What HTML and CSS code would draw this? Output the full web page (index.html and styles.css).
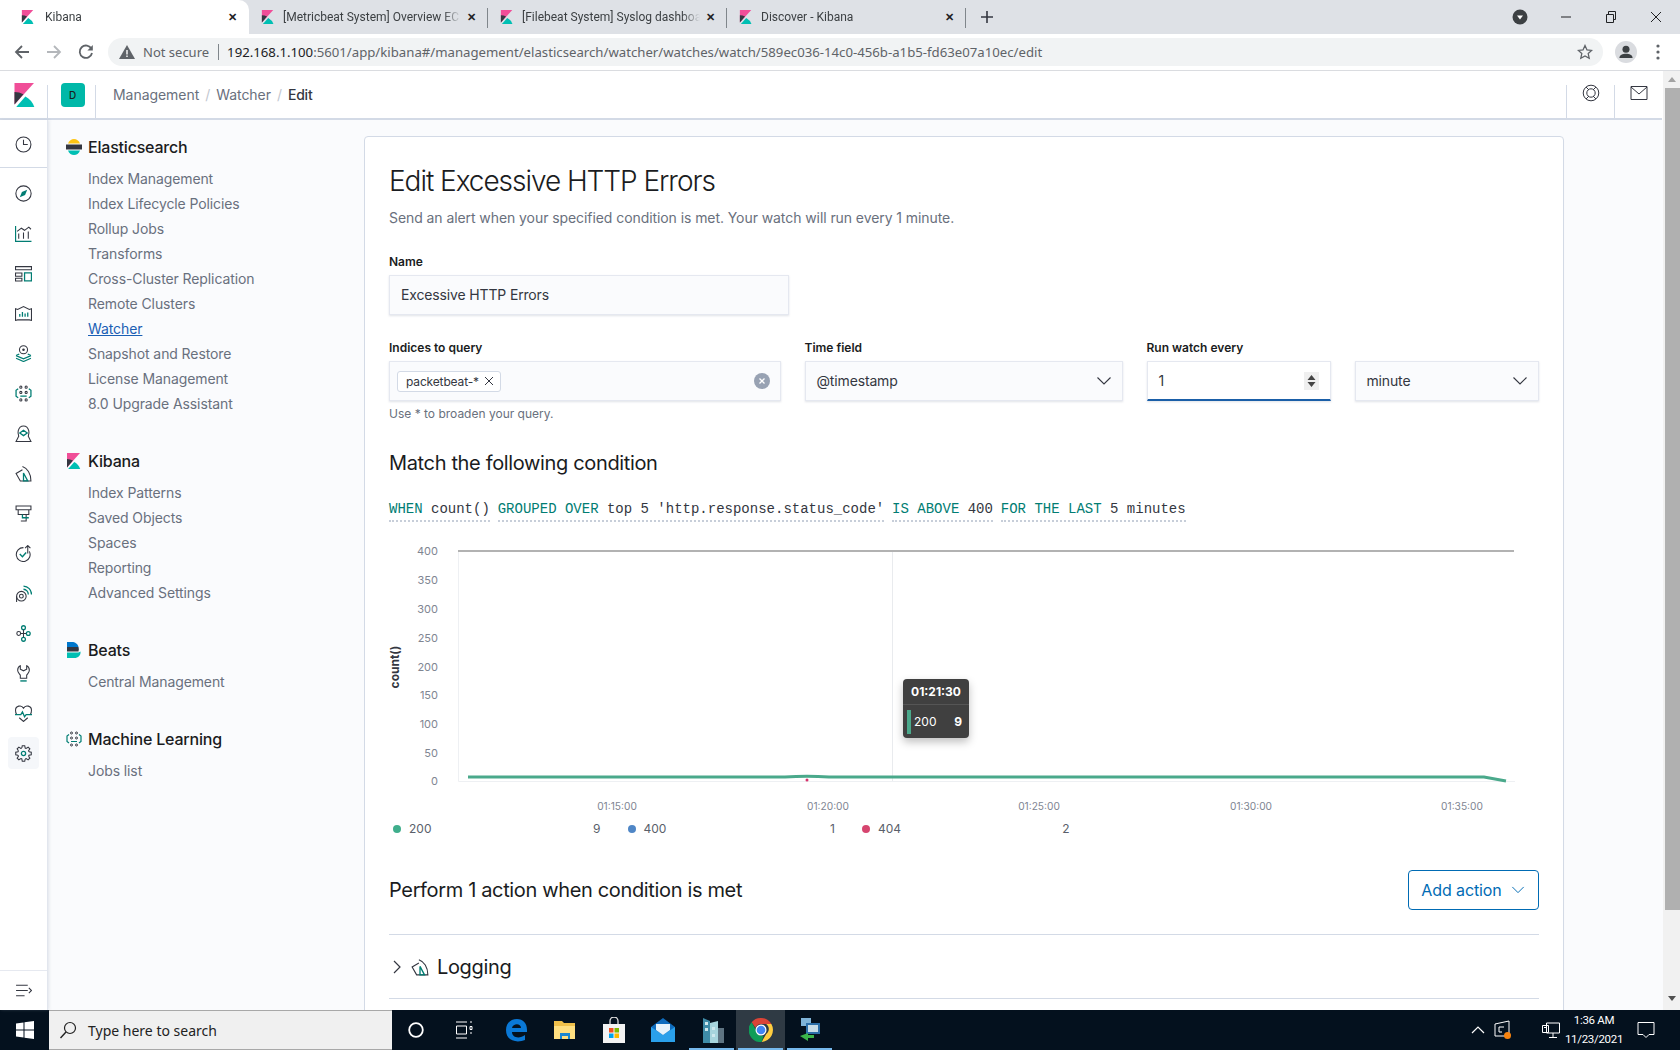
FILE: index.html
```html
<!DOCTYPE html>
<html lang="en">
<head>
    <meta charset="UTF-8">
    <meta name="viewport" content="width=device-width, initial-scale=1.0">
    <title>Kibana</title>
    <link rel="stylesheet" href="styles.css">
</head>
<body>
    <svg class="defs" width="0" height="0" aria-hidden="true">
        <symbol id="k-logo" viewBox="0 0 32 32">
            <path fill="#f04e98" d="M2 0v28.8L28 0z"/>
            <path fill="#343741" d="M2 12v16.8l11.9-13.7A24.7 24.7 0 0 0 2 12z"/>
            <path fill="#00bfb3" d="M16.5 18L4.3 32h24.1a24.7 24.7 0 0 0-11.9-14z"/>
        </symbol>
        <symbol id="ml-icon" viewBox="0 0 16 16">
            <g fill="none" stroke="#343741">
                <circle cx="5.5" cy="2" r="1"/><circle cx="10.5" cy="2" r="1"/>
                <circle cx="5.5" cy="7" r="1"/><circle cx="10.5" cy="7" r="1"/>
                <circle cx="5.5" cy="14" r="1"/><circle cx="10.5" cy="14" r="1"/>
            </g>
            <path fill="none" stroke="#017d73" stroke-width="1.2" d="M3 3.5L1 5v5.5L3 12M13 3.5L15 5v5.5L13 12M5 10.5h6"/>
        </symbol>
        <symbol id="log-icon" viewBox="0 0 16 16">
            <path fill="none" stroke="#343741" d="M7 1.5c4.5 1.500 8 6.500 8 13.500H5L1 8l6-3.500"/>
            <path fill="none" stroke="#017d73" stroke-width="1.2" d="M8 7.500l4 7.500H8z"/>
        </symbol>
        <symbol id="chevron" viewBox="0 0 16 16">
            <path fill="none" stroke="currentColor" stroke-width="1.1" d="M1.5 4.5L8 11l6.5-6.5"/>
        </symbol>
        <path id="gear-tooth" fill="none" stroke="#343741" d="M6.42 2.84L6.84.69h2.32l.42 2.15.95.39"/>
    </svg>

    <div class="tabstrip">
        <div class="tab tab-active">
            <svg class="favicon"><use href="#k-logo"/></svg>
            <span class="tab-title">Kibana</span>
            <span class="tab-close">✕</span>
        </div>
        <div class="tab">
            <svg class="favicon"><use href="#k-logo"/></svg>
            <span class="tab-title">[Metricbeat System] Overview EC</span>
            <span class="tab-close">✕</span>
        </div>
        <div class="tab">
            <svg class="favicon"><use href="#k-logo"/></svg>
            <span class="tab-title">[Filebeat System] Syslog dashboa</span>
            <span class="tab-close">✕</span>
        </div>
        <div class="tab">
            <svg class="favicon"><use href="#k-logo"/></svg>
            <span class="tab-title">Discover - Kibana</span>
            <span class="tab-close">✕</span>
        </div>
        <svg class="new-tab" width="14" height="14" viewBox="0 0 14 14"><path stroke="#343741" stroke-width="1.6" d="M7 1v12M1 7h12"/></svg>
        <div class="window-controls">
            <svg width="16" height="16" viewBox="0 0 16 16"><circle cx="8" cy="8" r="7.5" fill="#3c4043"/><path fill="#fff" d="M5 6.5h6L8 10.5z"/></svg>
            <svg class="win-min" width="12" height="12" viewBox="0 0 12 12"><path stroke="#202124" d="M1 6h10"/></svg>
            <svg class="win-max" width="12" height="12" viewBox="0 0 12 12"><path fill="none" stroke="#202124" d="M1.5 3.5h7v8h-7zM3.5 3.5v-3h7v8h-2"/></svg>
            <svg class="win-close" width="12" height="12" viewBox="0 0 12 12"><path stroke="#202124" d="M1 1l10 10M11 1L1 11"/></svg>
        </div>
    </div>

    <div class="toolbar">
        <svg class="nav-btn" width="16" height="16" viewBox="0 0 16 16"><path fill="none" stroke="#5f6368" stroke-width="1.8" d="M15 8H2M8 2L2 8l6 6"/></svg>
        <svg class="nav-btn" width="16" height="16" viewBox="0 0 16 16"><path fill="none" stroke="#b4b7bb" stroke-width="1.8" d="M1 8h13M8 2l6 6-6 6"/></svg>
        <svg class="nav-btn" width="16" height="16" viewBox="0 0 16 16"><path fill="none" stroke="#5f6368" stroke-width="1.8" d="M13.5 5A6.2 6.2 0 1 0 14 9"/><path fill="#5f6368" d="M14.8 1v5.4H9.4z"/></svg>
        <div class="omnibox">
            <svg width="16" height="14" viewBox="0 0 16 14"><path fill="#5f6368" d="M8 0l8 14H0z"/><path stroke="#fff" stroke-width="1.4" d="M8 5v4.5M8 10.5V12"/></svg>
            <span class="not-secure">Not secure</span>
            <span class="omni-sep"></span>
            <span class="url"><b>192.168.1.100</b>:5601/app/kibana#/management/elasticsearch/watcher/watches/watch/589ec036-14c0-456b-a1b5-fd63e07a10ec/edit</span>
            <svg class="star" width="16" height="16" viewBox="0 0 16 16"><path fill="none" stroke="#5f6368" stroke-width="1.3" d="M8 1.5l2 4.4 4.7.5-3.5 3.2 1 4.7L8 11.900l-4.200 2.400 1-4.700-3.500-3.200 4.700-.5z"/></svg>
        </div>
        <svg class="avatar" width="22" height="22" viewBox="0 0 20 20"><circle cx="10" cy="10" r="10" fill="#dadce0"/><circle cx="10" cy="7.5" r="3.2" fill="#3c4043"/><path fill="#3c4043" d="M4 15.5c0-3 3-4 6-4s6 1 6 4z"/></svg>
        <svg class="kebab" width="4" height="16" viewBox="0 0 4 16"><g fill="#5f6368"><circle cx="2" cy="2" r="1.6"/><circle cx="2" cy="8" r="1.6"/><circle cx="2" cy="14" r="1.6"/></g></svg>
    </div>

    <div class="app">
        <div class="app-body">
            <header class="kbn-header">
                <div class="logo-cell"><svg width="24" height="26"><use href="#k-logo"/></svg></div>
                <div class="space-cell"><span class="space-badge">D</span></div>
                <nav class="breadcrumbs">
                    <span>Management</span><i>/</i><span>Watcher</span><i>/</i><strong>Edit</strong>
                </nav>
                <div class="header-btn">
                    <svg width="18" height="18" viewBox="0 0 18 18"><g fill="none" stroke="#343741"><circle cx="9" cy="9" r="7.8"/><circle cx="9" cy="9" r="4.2"/><path d="M4 3l3 3M14 3l-3 3M4 15l3-3M14 15l-3-3"/></g></svg>
                </div>
                <div class="header-btn">
                    <svg width="18" height="14" viewBox="0 0 18 14"><path fill="none" stroke="#343741" d="M1 .5h16v13H1zM1 1l8 7 8-7"/></svg>
                </div>
            </header>

            <div class="columns">
                <aside class="rail">
                    <div class="rail-top">
                        <svg viewBox="0 0 16 16"><g fill="none" stroke="#343741"><circle cx="8" cy="8" r="7"/><path d="M8 3.5V8h4"/></g></svg>
                    </div>
                    <ul class="rail-list">
                        <li><svg viewBox="0 0 16 16"><circle cx="8" cy="8" r="7.2" fill="none" stroke="#343741"/><path fill="#017d73" d="M11.5 4.5l-2 5-5 2 2-5z"/></svg></li>
                        <li><svg viewBox="0 0 16 16"><path fill="none" stroke="#017d73" stroke-width="1.2" d="M.5 1v14.5h15"/><path fill="none" stroke="#343741" d="M3.5 13V8M8 13V7M12.5 13V6M2 6l4-3 3 2 4-3 2 2"/></svg></li>
                        <li><svg viewBox="0 0 16 16"><g fill="none"><path stroke="#343741" d="M.5 1.5h15v3H.5zM.5 7.5h6v3h-6zM.5 12.5h6V15h-6z"/><path stroke="#017d73" stroke-width="1.2" d="M9 7.5h6.500V15H9z"/></g></svg></li>
                        <li><svg viewBox="0 0 16 16"><path fill="none" stroke="#343741" d="M.5 3.5l2 .7L8 1.500l5.500 2.700 2-.7v11l-2-.5h-11l-2 .5z"/><path stroke="#017d73" stroke-width="1.2" d="M4.500 11V8.500M7 11V6.500M9.500 11V8M12 11V7"/></svg></li>
                        <li><svg viewBox="0 0 16 16"><circle cx="8" cy="4.500" r="3.800" fill="none" stroke="#343741"/><circle cx="8" cy="4.500" r="1.200" fill="#343741"/><path fill="none" stroke="#017d73" stroke-width="1.2" d="M1 10l7 3 7-3M1 12.500l7 3 7-3M4 8.500L1 10M12 8.500l3 1.500"/></svg></li>
                        <li><svg viewBox="0 0 16 16"><use href="#ml-icon"/></svg></li>
                        <li><svg viewBox="0 0 16 16"><path fill="none" stroke="#343741" d="M1 15.500h14L12.500 10.500C13 9 13.500 7.500 13 5.500 12.200 2.500 10 1 8 1S3.800 2.500 3 5.500C2.500 7.500 3 9 3.500 10.500z"/><path fill="none" stroke="#017d73" stroke-width="1.2" d="M4.500 7.500L8 5l3.500 2.500L8 10z"/></svg></li>
                        <li><svg viewBox="0 0 16 16"><use href="#log-icon"/></svg></li>
                        <li><svg viewBox="0 0 16 16"><path fill="none" stroke="#343741" d="M1 1h14v3.500H1zM3 4.500V9h10V4.500M10.500 9v6h-5"/><path fill="none" stroke="#017d73" stroke-width="1.2" d="M7 9v3h6"/></svg></li>
                        <li><svg viewBox="0 0 16 16"><path fill="none" stroke="#343741" d="M13.500 6A6.500 6.500 0 1 1 8 2.500M12 8V1M9.500 3L12 .5 14.500 3"/><path fill="none" stroke="#017d73" stroke-width="1.3" d="M4.500 8.500L7 11l3.500-4"/></svg></li>
                        <li><svg viewBox="0 0 16 16"><g fill="none"><circle cx="6" cy="10.500" r="4.500" stroke="#343741"/><circle cx="6" cy="10.500" r="1.800" stroke="#343741"/><path stroke="#343741" d="M1.500 10.500V16"/><path stroke="#017d73" stroke-width="1.2" d="M8 1a7.800 7.800 0 0 1 7.500 8M8 4a4.800 4.800 0 0 1 4.500 5"/></g></svg></li>
                        <li><svg viewBox="0 0 16 16"><g fill="none"><g stroke="#017d73" stroke-width="1.2"><circle cx="8" cy="2.500" r="1.800"/><circle cx="12.500" cy="8" r="1.800"/><circle cx="8" cy="13.500" r="1.800"/></g><circle cx="3.500" cy="8" r="1.800" stroke="#343741"/><path stroke="#343741" d="M5.500 8h5M8 4.500v7"/></g></svg></li>
                        <li><svg viewBox="0 0 16 16"><path fill="none" stroke="#343741" d="M5 .8C3 1.800 2.500 3.500 2.500 5c0 2 1.500 3 2.500 4.500v3h6v-3c1-1.500 2.500-2.500 2.500-4.500 0-1.500-.5-3.200-2.500-4.200V4L8 5.500 5 4z"/><path stroke="#017d73" stroke-width="1.3" d="M5 15h6"/></svg></li>
                        <li><svg viewBox="0 0 16 16"><path fill="none" stroke="#343741" d="M1.500 9C.5 7.500.5 5.800.5 5A4 4 0 0 1 8 3a4 4 0 0 1 7.500 2c0 .8 0 2.500-1 4M4 12l4 3.500 4-3.500"/><path fill="none" stroke="#017d73" stroke-width="1.2" d="M0 9h5.500L7 6.500 9 11l1.500-2H16"/></svg></li>
                        <li class="rail-active">
                            <svg viewBox="0 0 16 16">
                                <use href="#gear-tooth"/>
                                <use href="#gear-tooth" transform="rotate(45 8 8)"/>
                                <use href="#gear-tooth" transform="rotate(90 8 8)"/>
                                <use href="#gear-tooth" transform="rotate(135 8 8)"/>
                                <use href="#gear-tooth" transform="rotate(180 8 8)"/>
                                <use href="#gear-tooth" transform="rotate(225 8 8)"/>
                                <use href="#gear-tooth" transform="rotate(270 8 8)"/>
                                <use href="#gear-tooth" transform="rotate(315 8 8)"/>
                                <circle cx="8" cy="8" r="2" fill="none" stroke="#017d73" stroke-width="1.2"/>
                            </svg>
                        </li>
                    </ul>
                    <div class="rail-bottom">
                        <svg viewBox="0 0 16 16"><path fill="none" stroke="#343741" d="M1 3h11M1 8h11M13 5.500L15.500 8 13 10.500M1 13h8"/></svg>
                    </div>
                </aside>

                <nav class="sidebar">
                    <section class="side-section">
                        <h3>
                            <svg width="16" height="16" viewBox="0 0 16 16"><path fill="#fec514" d="M2 4.500C3 1.500 5.500 0 8 0s5 1.500 6 4.500z"/><rect y="5.500" width="16" height="5" fill="#343741"/><path fill="#00bfb3" d="M2 11.500h12C13 14.500 10.500 16 8 16s-5-1.500-6-4.500z"/></svg>
                            Elasticsearch
                        </h3>
                        <a>Index Management</a>
                        <a>Index Lifecycle Policies</a>
                        <a>Rollup Jobs</a>
                        <a>Transforms</a>
                        <a>Cross-Cluster Replication</a>
                        <a>Remote Clusters</a>
                        <a class="current">Watcher</a>
                        <a>Snapshot and Restore</a>
                        <a>License Management</a>
                        <a>8.0 Upgrade Assistant</a>
                    </section>
                    <section class="side-section">
                        <h3><svg width="16" height="16"><use href="#k-logo"/></svg> Kibana</h3>
                        <a>Index Patterns</a>
                        <a>Saved Objects</a>
                        <a>Spaces</a>
                        <a>Reporting</a>
                        <a>Advanced Settings</a>
                    </section>
                    <section class="side-section">
                        <h3>
                            <svg width="16" height="16" viewBox="0 0 16 16"><path fill="#0077cc" d="M1 0h5c3 0 6 2 6.500 5H1z"/><path fill="#343741" d="M1 5h11.500c.5 1.500 .5 3 0 4.500H1z"/><path fill="#00bfb3" d="M1 10.500h11.500l2-1c.5 4-2.500 6.500-6 6.500H1z"/></svg>
                            Beats
                        </h3>
                        <a>Central Management</a>
                    </section>
                    <section class="side-section">
                        <h3><svg width="16" height="16"><use href="#ml-icon"/></svg> Machine Learning</h3>
                        <a>Jobs list</a>
                    </section>
                </nav>

                <main class="content">
                    <div class="panel">
                        <h1>Edit Excessive HTTP Errors</h1>
                        <p class="subtitle">Send an alert when your specified condition is met. Your watch will run every 1 minute.</p>

                        <div class="field field-name">
                            <label>Name</label>
                            <div class="input input-text">Excessive HTTP Errors</div>
                        </div>

                        <div class="form-row">
                            <div class="field">
                                <label>Indices to query</label>
                                <div class="input input-combo">
                                    <span class="chip">packetbeat-* <svg width="10" height="10" viewBox="0 0 10 10"><path stroke="#343741" d="M1 1l8 8M9 1L1 9"/></svg></span>
                                    <svg class="clear" width="16" height="16" viewBox="0 0 16 16"><circle cx="8" cy="8" r="8" fill="#98a2b3"/><path stroke="#fff" stroke-width="1.3" d="M5.500 5.500l5 5M10.500 5.500l-5 5"/></svg>
                                </div>
                                <p class="hint">Use * to broaden your query.</p>
                            </div>
                            <div class="field">
                                <label>Time field</label>
                                <div class="input input-select"><span>@timestamp</span> <svg class="caret" width="16" height="16"><use href="#chevron"/></svg></div>
                            </div>
                            <div class="field">
                                <label>Run watch every</label>
                                <div class="input input-number">1
                                    <svg class="stepper" width="15" height="18" viewBox="0 0 15 18"><rect width="15" height="18" fill="#efefef"/><path fill="#444" d="M7.500 3l4 5h-8zM7.500 15l-4-5h8z"/></svg>
                                </div>
                            </div>
                            <div class="field">
                                <label>&nbsp;</label>
                                <div class="input input-select"><span>minute</span> <svg class="caret" width="16" height="16"><use href="#chevron"/></svg></div>
                            </div>
                        </div>

                        <h2 class="cond-title">Match the following condition</h2>
                        <div class="condition">
                            <span><em>WHEN</em> count()</span>
                            <span><em>GROUPED OVER</em> top 5 'http.response.status_code'</span>
                            <span><em>IS ABOVE</em> 400</span>
                            <span><em>FOR THE LAST</em> 5 minutes</span>
                        </div>

                        <div class="chart">
                            <svg class="chart-svg" width="1158" height="279" viewBox="381 540 1158 279">
                                <g class="y-ticks">
                                    <text x="438" y="555">400</text>
                                    <text x="438" y="584">350</text>
                                    <text x="438" y="613">300</text>
                                    <text x="438" y="642">250</text>
                                    <text x="438" y="671">200</text>
                                    <text x="438" y="699">150</text>
                                    <text x="438" y="728">100</text>
                                    <text x="438" y="757">50</text>
                                    <text x="438" y="785">0</text>
                                </g>
                                <text class="y-title" transform="translate(399 667) rotate(-90)">count()</text>
                                <path stroke="#eef0f3" fill="none" d="M458.500 551v230.500H1515"/>
                                <path stroke="#e9ebee" d="M892.500 552v229"/>
                                <path stroke="#b2b2b2" stroke-width="2" d="M458 551h1056"/>
                                <path stroke="#4aa98b" stroke-width="3" fill="none" d="M468 777H785Q807 775.500 829 777H1484L1506 781"/>
                                <circle cx="807" cy="780" r="1.500" fill="#d6336c"/>
                                <g class="x-ticks">
                                    <text x="617" y="810">01:15:00</text>
                                    <text x="828" y="810">01:20:00</text>
                                    <text x="1039" y="810">01:25:00</text>
                                    <text x="1251" y="810">01:30:00</text>
                                    <text x="1462" y="810">01:35:00</text>
                                </g>
                            </svg>
                            <div class="chart-tip">
                                <div class="tip-head">01:21:30</div>
                                <div class="tip-row"><span class="tip-bar"></span><span>200</span><b>9</b></div>
                            </div>
                            <div class="legend">
                                <div class="legend-item"><span class="dot dot-green"></span><span>200</span><span class="legend-val">9</span></div>
                                <div class="legend-item"><span class="dot dot-blue"></span><span>400</span><span class="legend-val">1</span></div>
                                <div class="legend-item"><span class="dot dot-red"></span><span>404</span><span class="legend-val">2</span></div>
                            </div>
                        </div>

                        <div class="action-head">
                            <h2>Perform 1 action when condition is met</h2>
                            <button class="add-action">Add action <svg width="14" height="14"><use href="#chevron"/></svg></button>
                        </div>

                        <div class="accordion">
                            <svg class="acc-arrow" width="12" height="14" viewBox="0 0 12 14"><path fill="none" stroke="#343741" stroke-width="1.2" d="M3 1l6 6-6 6"/></svg>
                            <svg width="18" height="18"><use href="#log-icon"/></svg>
                            <span>Logging</span>
                        </div>
                    </div>
                </main>

                <div class="scrollbar">
                    <span class="arrow-up"></span>
                    <div class="thumb"></div>
                    <span class="arrow-down"></span>
                </div>
            </div>
        </div>
    </div>

    <footer class="taskbar">
        <div class="start">
            <svg width="18" height="18" viewBox="0 0 18 18"><path fill="#fff" d="M0 2.500l7.500-1v7H0zM8.500 1.300L18 0v8.500H8.500zM0 9.500h7.500v7L0 15.500zM8.500 9.500H18V18l-9.500-1.300z"/></svg>
        </div>
        <div class="search">
            <svg width="18" height="18" viewBox="0 0 18 18"><circle cx="11" cy="7" r="5.500" fill="none" stroke="#222" stroke-width="1.2"/><path stroke="#222" stroke-width="1.4" d="M7 11l-5.500 6"/></svg>
            <span>Type here to search</span>
        </div>
        <div class="task-icon task-sys">
            <svg width="16" height="16" viewBox="0 0 16 16"><circle cx="8" cy="8" r="6.800" fill="none" stroke="#fff" stroke-width="1.8"/></svg>
        </div>
        <div class="task-icon task-sys">
            <svg width="18" height="18" viewBox="0 0 18 18"><path fill="none" stroke="#fff" d="M1 1h11M1 17h11M1.500 5h10v8h-10zM15 1h2M15 5.500h2v3h-2zM15 12h2"/></svg>
        </div>
        <div class="task-icon task-edge">
            <svg width="22" height="24" viewBox="0 0 22 24"><path fill="#0a78d6" d="M1 12C1 5 6 1 12 1c6 0 10 4 10 11v2H7c0 6 8 7 13 3v5c-7 3-19 2-19-10zM7 10h9c0-5-8-5-9 0z"/></svg>
        </div>
        <div class="task-icon">
            <svg width="22" height="20" viewBox="0 0 22 20"><path fill="#f0c04a" d="M0 1h8l2 2h11v16H0z"/><path fill="#ffdf80" d="M0 6h21v13H0z"/><path fill="#1a86d0" d="M6 19v-6h10v6h-2v-3H8v3z"/></svg>
        </div>
        <div class="task-icon">
            <svg width="22" height="26" viewBox="0 0 22 26"><path fill="none" stroke="#ddd" stroke-width="1.3" d="M7 7V4a4 4 0 0 1 8 0v3"/><rect y="7" width="22" height="19" fill="#f3f3f3"/><rect x="6" y="11" width="4.500" height="4.500" fill="#f25022"/><rect x="11.500" y="11" width="4.500" height="4.500" fill="#7fba00"/><rect x="6" y="16.500" width="4.500" height="4.500" fill="#00a4ef"/><rect x="11.500" y="16.500" width="4.500" height="4.500" fill="#ffb900"/></svg>
        </div>
        <div class="task-icon">
            <svg width="24" height="24" viewBox="0 0 24 24"><path fill="#0f6cbd" d="M12 0l12 9v15H0V9z"/><path fill="#2aa0ea" d="M0 9l12 8 12-8v15H0z"/><path fill="#e6f3fb" d="M5 6h14v6l-7 5-7-5z"/></svg>
        </div>
        <div class="task-icon task-open">
            <svg width="24" height="26" viewBox="0 0 24 26"><path fill="#3f8ca8" d="M3 1l7 3v22H3z"/><path fill="#a7d5dd" d="M10 6l8-2v22h-8z"/><path fill="#5e7482" d="M18 11h6v15h-6z"/><path fill="#cfe9ee" d="M5 5h3v3H5zM5 11h3v3H5zM12 10h3v3h-3zM12 17h3v3h-3z"/></svg>
        </div>
        <div class="task-icon task-open task-current">
            <svg width="24" height="24" viewBox="0 0 24 24"><path fill="#db4437" d="M12 0a12 12 0 0 1 10.400 6H12a6 6 0 0 0-5.600 3.800L2.600 4.200A12 12 0 0 1 12 0z"/><path fill="#ffcd40" d="M22.400 6a12 12 0 0 1-9.700 17.900l4.500-8a6 6 0 0 0 0-9.900z"/><path fill="#0f9d58" d="M12.700 24A12 12 0 0 1 2.600 4.200l4.700 8.200a6 6 0 0 0 7.200 5.300z"/><circle cx="12" cy="12" r="5.500" fill="#fff"/><circle cx="12" cy="12" r="4.300" fill="#4285f4"/></svg>
        </div>
        <div class="task-icon task-open">
            <svg width="24" height="26" viewBox="0 0 24 26"><path fill="#7fb4d8" d="M3 1h10v8H3z"/><path fill="#2b6ea8" d="M8 6h14v11H8z"/><path fill="#c8dde8" d="M10 8h10v7H10z"/><path fill="#3bb54a" d="M2 19l8-3v2h6v3h-6v3z"/></svg>
        </div>
        <div class="tray">
            <svg width="14" height="8" viewBox="0 0 14 8"><path fill="none" stroke="#fff" stroke-width="1.2" d="M1 7l6-6 6 6"/></svg>
            <svg class="tray-box" width="18" height="20" viewBox="0 0 18 20"><path fill="none" stroke="#fff" d="M1 4l14-3v15H1z"/><path stroke="#fff" fill="none" d="M5 7h5M5 7v5h3"/><circle cx="13.500" cy="15.500" r="3.500" fill="#f7830f"/></svg>
            <svg class="tray-net" width="18" height="18" viewBox="0 0 18 18"><path fill="none" stroke="#fff" d="M4.500 2h13v10h-13zM11 12v4M7 16.500h8M.5 4.500h6v7h-6zM2 6.500h3"/></svg>
            <div class="clock"><span>1:36 AM</span><span>11/23/2021</span></div>
            <svg class="tray-note" width="18" height="18" viewBox="0 0 18 18"><path fill="none" stroke="#fff" d="M1 1.500h16v12h-5l-3 3-3-3H1z"/></svg>
        </div>
    </footer>
</body>
</html>
```

FILE: styles.css
```css
* {
    box-sizing: border-box;
}
html, body {
    height: 100%;
}
body {
    margin: 0;
    height: 1050px;
    width: 1680px;
    overflow: hidden;
    display: flex;
    flex-direction: column;
    font-family: "Inter", "Liberation Sans", sans-serif;
    color: #343741;
    background: #fff;
}
.defs {
    position: absolute;
}

/* browser chrome */
.tabstrip {
    height: 34px;
    flex: none;
    display: flex;
    align-items: stretch;
    background: #dee1e6;
    font-family: "Roboto", sans-serif;
    font-size: 12px;
}
.tab {
    width: 239px;
    display: flex;
    align-items: center;
    padding: 0 9px 0 12px;
    position: relative;
}
.tab::after {
    content: "";
    position: absolute;
    right: 0;
    top: 8px;
    bottom: 6px;
    width: 1px;
    background: #80868b;
}
.tab-active {
    width: 249px;
    padding-left: 21px;
    background: #fff;
    border-radius: 0 10px 0 0;
}
.tab-active::after {
    display: none;
}
.favicon {
    width: 14px;
    height: 16px;
    flex: none;
    margin-right: 8px;
}
.tab-active .favicon {
    margin-right: 10px;
}
.tab-title {
    flex: 1;
    white-space: nowrap;
    overflow: hidden;
    color: #3c4043;
    -webkit-mask-image: linear-gradient(to right, #000 90%, transparent);
    mask-image: linear-gradient(to right, #000 90%, transparent);
}
.tab-close {
    flex: none;
    width: 16px;
    text-align: center;
    font-size: 11px;
    font-weight: bold;
    color: #202124;
    margin-left: 2px;
}
.new-tab {
    margin: 10px 0 0 14px;
}
.window-controls {
    margin-left: auto;
    display: flex;
    align-items: center;
    padding-right: 18px;
}
.win-min {
    margin-left: 32px;
}
.win-max, .win-close {
    margin-left: 33px;
}
.toolbar {
    height: 37px;
    flex: none;
    display: flex;
    align-items: center;
    padding: 1px 0 2px 14px;
    background: #fff;
    border-bottom: 1px solid #dadce0;
    font-family: "Noto Sans", sans-serif;
}
.nav-btn {
    margin-right: 16px;
}
.omnibox {
    width: 1495px;
    height: 28px;
    margin-left: -2px;
    border-radius: 14px;
    background: #f1f3f4;
    display: flex;
    align-items: center;
    padding: 0 10px 0 11px;
    font-size: 13px;
    color: #5f6368;
}
.not-secure {
    margin-left: 8px;
}
.omni-sep {
    width: 1px;
    height: 16px;
    background: #80868b;
    margin: 0 8px 0 9px;
}
.url {
    white-space: nowrap;
    font-size: 13.2px;
}
.url b {
    font-weight: 400;
    color: #202124;
}
.star {
    margin-left: auto;
}
.avatar {
    margin-left: 12px;
}
.kebab {
    margin-left: 19px;
}

/* kibana shell */
.app {
    flex: 1;
    min-height: 0;
}
.app-body {
    height: 100%;
    display: flex;
    flex-direction: column;
}
.kbn-header {
    height: 49px;
    flex: none;
    width: 1662px;
    display: flex;
    align-items: stretch;
    background: #fff;
    border-bottom: 2px solid #d3dae6;
}
.logo-cell {
    width: 48px;
    display: flex;
    align-items: center;
    justify-content: center;
    padding-left: 2px;
    border-right: 1px solid #d3dae6;
    margin-top: 14px;
    padding-bottom: 14px;
}
.space-cell {
    width: 48px;
    display: flex;
    align-items: center;
    justify-content: center;
    padding-left: 2px;
    border-right: 1px solid #d3dae6;
    margin-top: 14px;
    padding-bottom: 14px;
}
.space-badge {
    width: 24px;
    height: 24px;
    border-radius: 4px;
    background: #00b8a8;
    color: #1a1c21;
    font-size: 10px;
    font-weight: 500;
    display: flex;
    align-items: center;
    justify-content: center;
}
.breadcrumbs {
    flex: 1;
    display: flex;
    align-items: center;
    padding: 0 0 0 17px;
    font-size: 14px;
    letter-spacing: -0.05px;
    color: #69707d;
}
.breadcrumbs i {
    font-style: normal;
    color: #c2c7d0;
    margin: 0 6px;
}
.breadcrumbs strong {
    font-weight: 500;
    color: #343741;
    letter-spacing: -0.2px;
}
.header-btn {
    width: 48px;
    display: flex;
    align-items: center;
    justify-content: center;
    border-left: 1px solid #d3dae6;
    margin-top: 14px;
    padding-bottom: 18px;
}
.columns {
    flex: 1;
    min-height: 0;
    display: flex;
}

/* icon rail */
.rail {
    width: 48px;
    flex: none;
    display: flex;
    flex-direction: column;
    background: #fff;
    border-right: 1px solid #e2e6ee;
    box-shadow: 1px 0 3px rgba(152, 162, 179, 0.25);
    position: relative;
}
.rail svg {
    width: 17px;
    height: 17px;
}
.rail-top {
    height: 48px;
    padding-top: 1px;
    display: flex;
    align-items: center;
    justify-content: center;
    border-bottom: 1px solid #d3dae6;
}
.rail-list {
    list-style: none;
    margin: 0;
    padding: 5px 0 0;
}
.rail-list li {
    height: 40px;
    display: flex;
    align-items: center;
    justify-content: center;
    margin: 0 8px;
    border-radius: 4px;
}
.rail-list .rail-active {
    height: 32px;
    margin-top: 4px;
    background: #f5f7fa;
}
.rail-bottom {
    margin-top: auto;
    height: 40px;
    display: flex;
    align-items: center;
    justify-content: center;
    border-top: 1px solid #e6e9f0;
}

/* management side nav */
.sidebar {
    width: 316px;
    flex: none;
    padding: 15px 0 0 18px;
    background: #fafbfd;
}
.side-section {
    margin-bottom: 33px;
}
.side-section h3 {
    margin: 0 0 7px;
    height: 24px;
    display: flex;
    align-items: center;
    gap: 6px;
    font-size: 16px;
    font-weight: 500;
    letter-spacing: -0.2px;
    color: #1a1c21;
}
.side-section a {
    display: block;
    height: 25px;
    line-height: 25px;
    margin-left: 22px;
    font-size: 14px;
    letter-spacing: -0.1px;
    color: #69707d;
}
.side-section a.current {
    color: #1a5fb4;
    text-decoration: underline;
}

/* page content */
.content {
    flex: 1;
    min-width: 0;
    padding: 16px 0 0;
    background: #fafbfd;
    overflow: hidden;
}
.panel {
    width: 1200px;
    height: 920px;
    padding: 24px;
    background: #fff;
    border: 1px solid #d3dae6;
    border-radius: 4px 4px 0 0;
    box-shadow: 0 2px 2px -1px rgba(152, 162, 179, 0.2);
}
h1 {
    margin: 2px 0 0;
    height: 36px;
    line-height: 36px;
    font-size: 28px;
    font-weight: 300;
    letter-spacing: -1.05px;
    color: #1a1c21;
}
.subtitle {
    margin: 9px 0 0;
    line-height: 20px;
    font-size: 14px;
    letter-spacing: -0.075px;
    color: #69707d;
}
.field label {
    display: block;
    height: 18px;
    line-height: 18px;
    margin-bottom: 4px;
    font-size: 12px;
    font-weight: 600;
    color: #1a1c21;
}
.field-name {
    margin-top: 25px;
    width: 400px;
}
.input {
    height: 40px;
    padding: 0 11px;
    display: flex;
    align-items: center;
    background: #fafbfd;
    border: 1px solid #e5e8f0;
    box-shadow: 0 1px 2px rgba(152, 162, 179, 0.3);
    font-size: 14px;
    letter-spacing: -0.15px;
    color: #343741;
}
.input-text {
    padding-bottom: 2px;
}
.form-row {
    margin-top: 24px;
    display: grid;
    grid-template-columns: 391.5px 318px 184px 184px;
    column-gap: 24px;
    justify-content: start;
}
.input-combo {
    padding: 0 10px 0 7px;
}
.chip {
    height: 21px;
    padding: 0 6px 0 8px;
    display: flex;
    align-items: center;
    gap: 5px;
    background: #fff;
    border: 1px solid #d3dae6;
    border-radius: 3px;
    font-size: 12px;
}
.clear {
    margin-left: auto;
}
.hint {
    margin: 5px 0 0;
    line-height: 16px;
    font-size: 12px;
    color: #69707d;
}
.input-select {
    justify-content: space-between;
    padding-right: 10px;
}
.input-select span {
    margin-top: -2px;
}
.caret {
    color: #343741;
}
.input-number {
    justify-content: space-between;
    background: #fff;
    border-bottom: 2px solid #1a5fa8;
    padding-right: 11px;
}
.cond-title {
    margin: 27px 0 0;
}
h2 {
    line-height: 28px;
    font-size: 20px;
    font-weight: 400;
    letter-spacing: -0.35px;
    color: #1a1c21;
}
.condition {
    margin-top: 22px;
    display: flex;
    gap: 7.9px;
    font-family: "Liberation Mono", monospace;
    font-size: 14px;
    line-height: 20px;
    color: #343741;
}
.condition span {
    border-bottom: 2px dotted #c7ced9;
    height: 23px;
}
.condition em {
    font-style: normal;
    color: #017d73;
}

/* chart */
.chart {
    margin-top: 18px;
    position: relative;
}
.chart-svg {
    display: block;
    margin-left: -8px;
}
.y-ticks text {
    text-anchor: end;
    font-size: 11px;
    fill: #808592;
}
.y-title {
    text-anchor: middle;
    font-size: 12px;
    font-weight: 700;
    fill: #343741;
}
.x-ticks text {
    text-anchor: middle;
    font-size: 10.2px;
    fill: #808592;
}
.chart-tip {
    position: absolute;
    left: 514px;
    top: 139px;
    width: 66px;
    height: 59px;
    background: #404040;
    border-radius: 4px;
    box-shadow: 0 4px 8px rgba(0, 0, 0, 0.25);
    color: #fff;
    font-size: 12px;
}
.tip-head {
    height: 26px;
    line-height: 25px;
    text-align: center;
    font-weight: 700;
    border-bottom: 1px solid #555;
}
.tip-row {
    height: 33px;
    display: flex;
    align-items: center;
    padding: 0 7px 0 4px;
}
.tip-bar {
    width: 4px;
    height: 24px;
    margin-right: 3px;
    background: #4aa98b;
}
.tip-row b {
    margin-left: auto;
}
.legend {
    display: grid;
    grid-template-columns: repeat(3, 234.5px);
    padding: 0 0 0 4px;
    height: 19px;
    font-size: 12px;
    color: #5a5f6b;
}
.legend-item {
    display: flex;
    align-items: center;
    padding-right: 27px;
}
.legend-val {
    margin-left: auto;
}
.dot {
    width: 8px;
    height: 8px;
    border-radius: 50%;
    margin-right: 8px;
}
.dot-green {
    background: #3fae8c;
}
.dot-blue {
    background: #4f86c6;
}
.dot-red {
    background: #d6456f;
}
.action-head {
    margin-top: 32px;
    height: 40px;
    display: flex;
    align-items: center;
    justify-content: space-between;
}
.action-head h2 {
    margin: 0;
}
.add-action {
    width: 131px;
    height: 40px;
    padding: 0 1px 0 0;
    display: flex;
    align-items: center;
    justify-content: center;
    gap: 9px;
    background: #fff;
    border: 1px solid #006bb4;
    border-radius: 4px;
    font-family: inherit;
    font-size: 16px;
    letter-spacing: -0.1px;
    color: #006bb4;
}
.accordion {
    margin-top: 24px;
    height: 65px;
    display: flex;
    align-items: center;
    gap: 8px;
    padding-left: 2px;
    border-top: 1px solid #d3dae6;
    border-bottom: 1px solid #d3dae6;
    font-size: 20px;
    letter-spacing: -0.35px;
    color: #1a1c21;
}

/* page scrollbar */
.scrollbar {
    width: 17px;
    flex: none;
    margin-top: -49px;
    display: flex;
    flex-direction: column;
    align-items: center;
    background: #f1f1f1;
}
.arrow-up, .arrow-down {
    flex: none;
    width: 0;
    height: 0;
    margin: 6px 0;
    border-left: 4px solid transparent;
    border-right: 4px solid transparent;
}
.arrow-up {
    border-bottom: 5px solid #a3a3a3;
}
.arrow-down {
    margin-top: 86px;
    border-top: 5px solid #505050;
}
.thumb {
    width: 15px;
    height: 822px;
    margin-left: 2px;
    background: #b0b0b0;
}

/* windows taskbar */
.taskbar {
    height: 40px;
    flex: none;
    display: flex;
    align-items: stretch;
    background: #04111e;
    font-family: "Noto Sans", sans-serif;
    color: #fff;
}
.start {
    width: 49px;
    display: flex;
    align-items: center;
    justify-content: center;
}
.search {
    width: 343px;
    display: flex;
    align-items: center;
    gap: 11px;
    padding-left: 10px;
    background: #f0f0f0;
    border-top: 1px solid #a8a8a8;
    border-bottom: 1px solid #a8a8a8;
    font-size: 14px;
    color: #222;
}
.task-icon {
    width: 49px;
    display: flex;
    align-items: center;
    justify-content: center;
    position: relative;
}
.task-sys {
    width: 48px;
}
.task-edge {
    margin-left: 3px;
}
.task-open::after {
    content: "";
    position: absolute;
    left: 2px;
    right: 2px;
    bottom: 0;
    height: 2px;
    background: #76b9ed;
}
.task-current {
    background: #2f3a44;
}
.tray {
    margin-left: auto;
    display: flex;
    align-items: center;
    padding-right: 25px;
}
.tray-box {
    margin-left: 9px;
}
.tray-net {
    margin-left: 30px;
}
.clock {
    margin-left: 4px;
    width: 60px;
    display: flex;
    flex-direction: column;
    align-items: center;
    font-family: "Roboto", sans-serif;
    font-size: 11.5px;
    letter-spacing: -0.3px;
    line-height: 19px;
}
.tray-note {
    margin-left: 13px;
}
```
